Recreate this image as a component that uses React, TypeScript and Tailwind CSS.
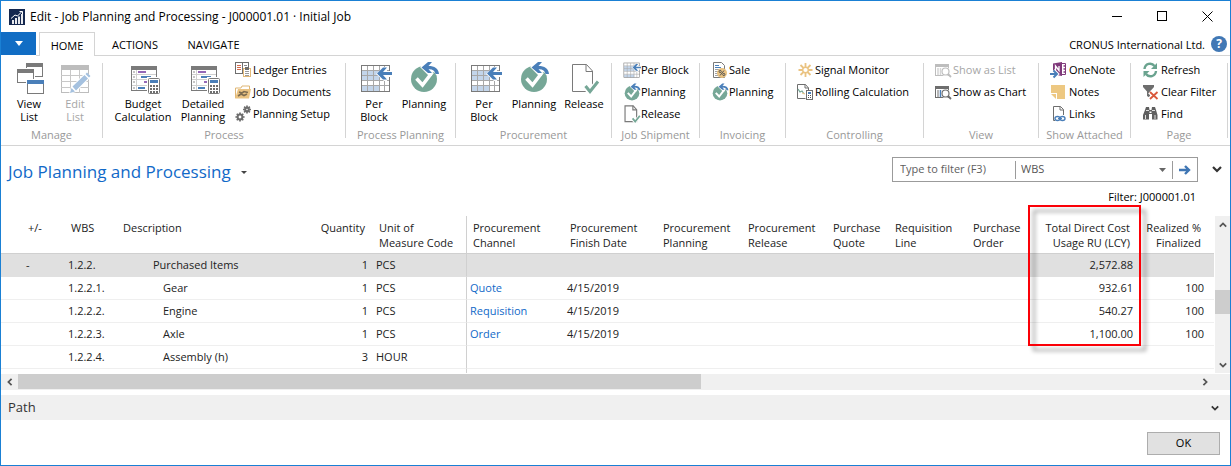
import React from "react";

type IconProps = { size?: "sm" | "lg" };
type IconType = (p: IconProps) => React.ReactElement;

const sizeClass = (size?: "sm" | "lg") =>
  size === "lg" ? "size-8 shrink-0 overflow-visible" : "size-[18px] shrink-0 overflow-visible";

const ViewListIcon: IconType = () => (
  <svg viewBox="0 0 32 32" className={sizeClass("lg")} aria-hidden="true">
    {[
      [13, 2, "#7a7a7a"],
      [4, 8, "#7a7a7a"],
      [14, 19, "#4a7fb9"],
    ].map(([x, y, c]) => (
      <g key={String(x)}>
        <rect x={Number(x) - 1} y={Number(y) - 1} width="19" height="16" fill="#fff" />
        <rect x={Number(x) + 0.5} y={Number(y) + 0.5} width="16" height="13" fill="#fff" stroke="#7a7a7a" />
        <rect x={Number(x)} y={Number(y)} width="17" height="4" fill={String(c)} />
      </g>
    ))}
  </svg>
);

const EditListIcon: IconType = () => (
  <svg viewBox="0 0 32 32" className={sizeClass("lg")} aria-hidden="true">
    <rect x="2.5" y="4.5" width="27" height="27" fill="#fff" stroke="#bdbdbd" />
    <rect x="2" y="4" width="28" height="5" fill="#bdbdbd" />
    <path d="M2 14.5h28M2 20.5h28M2 26.5h28M11.5 9v23M20.500 9v23" stroke="#c8c8c8" fill="none" />
    <path d="M10 33l2-7L27 11l5 5-15 15z" fill="#fff" />
    <path d="M11 32l1.500-5 3.500 3.500zM13.500 25.500L25.500 14l3.500 3.500L17 29.500zM26.500 13l1.500-1.500 3.500 3.500-1.500 1.500z" fill="#a5c1df" />
  </svg>
);

const CalculationIcon: IconType = () => (
  <svg viewBox="0 0 32 32" className={sizeClass("lg")} aria-hidden="true">
    <rect x="4.5" y="5.5" width="25" height="24" fill="#fff" stroke="#7a7a7a" />
    <rect x="4" y="5" width="26" height="4" fill="#7a7a7a" />
    <path d="M5 13.500h24M5 18.500h24M5 24.500h24M9.500 9v20" stroke="#d0d0d0" fill="none" />
    <path d="M6 11h2M6 16h2M6 21h2M6 27h2" stroke="#8a8a8a" />
    <path d="M11 11h8M17 21h5" stroke="#9468b8" strokeWidth="2" />
    <path d="M14 16h10M11 27h7" stroke="#4a7fb9" strokeWidth="2" />
    <rect x="20" y="16" width="14" height="18" fill="#fff" />
    <rect x="21.500" y="17.500" width="11" height="15" rx="1" fill="#fff" stroke="#7a7a7a" />
    <rect x="23" y="19" width="8" height="3" fill="#4a7fb9" />
    <path d="M23 25h2M26 25h2M29 25h2M23 28h2M26 28h2M29 28h2M23 31h2M26 31h2M29 31h2" stroke="#6e6e6e" strokeWidth="2" />
  </svg>
);

const BlockIcon: IconType = ({ size }) => (
  <svg viewBox={size === "lg" ? "0 0 32 32" : "2 1 32 32"} className={sizeClass(size)} aria-hidden="true">
    <rect x="3" y="4" width="29" height="27" fill="#fff" />
    <rect x="4" y="10" width="18" height="9" fill="#c3d5ea" />
    <rect x="4" y="25" width="18" height="5" fill="#c3d5ea" />
    <path d="M4 9.500h28M4 14.500h28M4 19.500h28M4 24.500h28M9.500 5v25M15.500 5v25M21.500 5v25M26.500 5v25" stroke="#a8a8a8" fill="none" />
    <rect x="3.500" y="4.500" width="28" height="26" fill="none" stroke="#7a7a7a" />
    <path d="M18 13l8-7h3v4h6v6h-6v4h-3z" fill="#fff" />
    <path d="M19 12.500l6-6h4l-4 4.500h9v3h-9l4 4.500h-4z" fill="#4a7fb9" />
  </svg>
);

const PlanningIcon: IconType = ({ size }) => (
  <svg viewBox="0 0 32 32" className={sizeClass(size)} aria-hidden="true">
    <circle cx="16" cy="18" r="13" fill="#76a797" />
    <path d="M8.500 17.500l6 6.500 10-13" fill="none" stroke="#fff" strokeWidth="3.500" />
    <path d="M12 6l8-6h4v3c5 1 8 4 8 11h-4c-1-3-2-3-4-3v4l-4-1z" fill="#fff" />
    <path d="M13.500 6.500L20 1h4l-3.500 4c6 0 10 2.500 10.500 8h-3.500c-.5-3.500-3-5-7-4.800L24 12h-4z" fill="#4a7fb9" />
  </svg>
);

const ReleaseIcon: IconType = ({ size }) => (
  <svg viewBox={size === "lg" ? "0 0 32 32" : "1 2 31 31"} className={sizeClass(size)} aria-hidden="true">
    <path
      d="M4.500 3.500h14l6 6.500v20.500h-20z"
      fill="#fff"
      stroke="#7a7a7a"
      strokeWidth={size === "lg" ? 1 : 2}
    />
    <path d="M18 3.500V10.500h6.500" fill="none" stroke="#7a7a7a" strokeWidth={size === "lg" ? 1 : 2} />
    <path d="M17 25l5 6 8.500-11" fill="none" stroke="#fff" strokeWidth="6" />
    <path d="M17.500 25l4.500 5.500 8-10" fill="none" stroke="#76a797" strokeWidth="3" />
  </svg>
);

const LedgerIcon: IconType = () => (
  <svg viewBox="0 0 18 18" className={sizeClass()} aria-hidden="true">
    <rect x=".5" y="1.500" width="13" height="11" fill="#fff" stroke="#6e6e6e" />
    <path d="M7.500 2v10" stroke="#6e6e6e" />
    <path d="M2 4.500h4M2 6.500h4M2 8.500h4" stroke="#d4694a" />
    <path d="M9 4.500h3" stroke="#8a8a8a" />
    <rect x="8" y="6" width="9" height="11" fill="#fff" />
    <rect x="8.500" y="7.500" width="7" height="8" fill="#fff" stroke="#e3b978" />
    <rect x="10" y="6" width="4" height="3" fill="#6e6e6e" />
    <path d="M10 10.500h4M10 12.500h4M10 14.500h4" stroke="#9a9a9a" />
  </svg>
);

const FolderIcon: IconType = () => (
  <svg viewBox="0 0 18 18" className={sizeClass()} aria-hidden="true">
    <path d="M.5 15V5h5.500l1-2h7.500v3" fill="#fff" stroke="#dfb675" />
    <path d="M0 15.500L3 6h13l-2 9.500z" fill="#eac382" />
    <path d="M4 9l3 1 2-1.500 4 1M3 13l3-2 3 1.500 3-1.500" stroke="#7d6c50" strokeWidth="1.600" fill="none" />
  </svg>
);

const gear = (cx: number, cy: number, r: number) => (
  <g transform={`translate(${cx} ${cy})`}>
    <circle r={r - 1.6} fill="none" stroke="#6e6e6e" strokeWidth="2" />
    {[0, 45, 90, 135].map((a) => (
      <g key={a} transform={`rotate(${a})`}>
        <path d={`M0 ${-r - 0.6}V${-r + 1.4}M0 ${r + 0.6}V${r - 1.4}`} stroke="#6e6e6e" strokeWidth="1.700" />
      </g>
    ))}
  </g>
);
const GearsIcon: IconType = () => (
  <svg viewBox="0 0 18 18" className={sizeClass()} aria-hidden="true">
    {gear(5, 12, 4)}
    {gear(12, 4.5, 3.4)}
  </svg>
);

const SaleIcon: IconType = () => (
  <svg viewBox="0 0 18 18" className={sizeClass()} aria-hidden="true">
    <path d="M2.500 1.500h8l3 3v12h-11z" fill="#fff" stroke="#7a7a7a" />
    <path d="M4 4.500h4M4 6.500h6" stroke="#4a7fb9" />
    <path d="M4 8.500h6M4 10.500h3M4 12.500h3M4 14.500h3" stroke="#a0a0a0" />
    <circle cx="11" cy="12" r="5" fill="#eac382" />
    <path d="M13 9.500l-4 5" stroke="#555" />
    <circle cx="9.200" cy="10.500" r="1.100" fill="none" stroke="#555" />
    <circle cx="12.800" cy="13.500" r="1.100" fill="none" stroke="#555" />
  </svg>
);

const SignalIcon: IconType = () => (
  <svg viewBox="0 0 18 18" className={sizeClass()} aria-hidden="true">
    <path
      d="M8.500 2v4.500M8.500 11.500v4.500M1.500 9h4.500M11 9h4.500M3.500 4l3.500 3.500M10 10.500l3.500 3.500M13.500 4L10 7.500M7 10.500l-3.500 3.500"
      stroke="#eac382"
      strokeWidth="1.800"
    />
    <circle cx="8.500" cy="9" r="2.800" fill="#fff" stroke="#eac382" strokeWidth="1.400" />
  </svg>
);

const RollingIcon: IconType = () => (
  <svg viewBox="0 0 18 18" className={sizeClass()} aria-hidden="true">
    <path d="M.5 1.500h8l3 3.500v10.500H.5z" fill="#fff" stroke="#6e6e6e" />
    <path d="M8 1.500V5h3.500" fill="none" stroke="#6e6e6e" />
    <path d="M1 6l2 3 2-1 2 3" fill="none" stroke="#76a797" strokeWidth="1.300" />
    <path d="M5 10l3 1" stroke="#eac382" />
    <rect x="8.500" y="7" width="9" height="11" fill="#fff" />
    <rect x="9.500" y="7.500" width="6" height="9" fill="#fff" stroke="#6e6e6e" />
    <rect x="11" y="9" width="3" height="2" fill="#4a7fb9" />
    <path d="M11 12.500h1M13 12.500h1M11 14.500h1M13 14.500h1" stroke="#555" />
  </svg>
);

const showAs = (stroke: string, bars: string): IconType => () => (
  <svg viewBox="0 0 18 18" className={sizeClass()} aria-hidden="true">
    <rect x=".5" y="3.500" width="13" height="11" fill="#fff" stroke={stroke} />
    <rect x="0" y="3" width="14" height="3" fill={stroke} />
    <path d="M3 7v7" stroke={stroke} />
    <path d="M5.500 7v7" stroke={bars} strokeWidth="1.500" />
    <circle cx="10.500" cy="10.500" r="4.500" fill="#fff" />
    <circle cx="10.500" cy="10.500" r="3.500" fill="#fff" stroke={stroke} strokeWidth="1.200" />
    <path d="M13 13l3 3" stroke={stroke} strokeWidth="1.800" />
  </svg>
);
const ShowListIcon = showAs("#bdbdbd", "#d5d5d5");
const ShowChartIcon = showAs("#6e6e6e", "#4a7fb9");

const OneNoteIcon: IconType = () => (
  <svg viewBox="0 0 18 18" className={sizeClass()} aria-hidden="true">
    <path d="M2 2.500L11 1v14l-9-1.500z" fill="#80397b" />
    <path d="M11 2.500h3.500v11H11" fill="#fff" stroke="#80397b" />
    <path d="M12.500 5h2M12.500 8h2M12.500 11h2" stroke="#80397b" strokeWidth="1.500" />
    <path d="M4.500 9V5l3.500 4.500V5" fill="none" stroke="#fff" strokeWidth="1.300" />
    <path d="M-1 13h6M2.500 9.500L6 13l-3.500 3.500" fill="none" stroke="#fff" strokeWidth="4" />
    <path d="M-1 13h6M2.500 9.500L6 13l-3.500 3.500" fill="none" stroke="#4a7fb9" strokeWidth="2" />
  </svg>
);

const NoteIcon: IconType = () => (
  <svg viewBox="0 0 18 18" className={sizeClass()} aria-hidden="true">
    <path d="M0 2h14v14H6v-6H0z" fill="#edc882" />
    <path d="M0 11h5v5z" fill="#edc882" />
  </svg>
);

const LinkIcon: IconType = () => (
  <svg viewBox="0 0 18 18" className={sizeClass()} aria-hidden="true">
    <path d="M2.500 1.500h7l3 3v11h-10z" fill="#fff" stroke="#6e6e6e" />
    <path d="M9 1.500V5h3.500" fill="none" stroke="#6e6e6e" />
    <rect x="4" y="10" width="11" height="7" fill="#fff" />
    <ellipse cx="6.500" cy="13.500" rx="2.500" ry="2" fill="none" stroke="#4a7fb9" strokeWidth="1.400" />
    <ellipse cx="11.500" cy="13.500" rx="2.500" ry="2" fill="none" stroke="#4a7fb9" strokeWidth="1.400" />
    <path d="M7 13.500h4" stroke="#4a7fb9" strokeWidth="1.200" />
  </svg>
);

const RefreshIcon: IconType = () => (
  <svg viewBox="0 0 18 18" className={sizeClass()} aria-hidden="true">
    <path d="M1.500 8C2 2.500 8.500 1 11.500 5" fill="none" stroke="#6aa38f" strokeWidth="2.400" />
    <path d="M14 2V8H8z" fill="#6aa38f" />
    <path d="M13 10c-.5 5.500-7 7-10 3" fill="none" stroke="#6aa38f" strokeWidth="2.400" />
    <path d="M.5 16V10h6z" fill="#6aa38f" />
  </svg>
);

const ClearFilterIcon: IconType = () => (
  <svg viewBox="0 0 18 18" className={sizeClass()} aria-hidden="true">
    <path d="M0 2h11v2L7 8.500V15l-3-2V8.500L0 4z" fill="#6e6e6e" />
    <path d="M6.500 9l8 7M14.500 9l-8 7" stroke="#fff" strokeWidth="4" />
    <path d="M7 9l7.500 7M14.500 9L7 16" stroke="#d9583b" strokeWidth="1.800" />
  </svg>
);

const FindIcon: IconType = () => (
  <svg viewBox="0 0 18 18" className={sizeClass()} aria-hidden="true">
    <path
      d="M2 5l1-3h3l.5 3h2L9 2h3l1 3 1.500 5v4.500H9V9H6v5.500H0V10zM6.500 6.500v1.500h2V6.500z"
      fill="#5f5f5f"
      fillRule="evenodd"
    />
    <path d="M2.500 10v4M12 10v4M3 5.500h3M9 5.500h3" stroke="#fff" strokeWidth=".8" />
  </svg>
);

const AppLogo = () => (
  <svg viewBox="0 0 16 16" className="size-4 shrink-0" aria-hidden="true">
    <rect width="16" height="16" fill="#15284f" />
    <path d="M4 15v-4M7 15V9M10 15V7.500M13 15V5" stroke="#fff" strokeWidth="1.800" />
    <path d="M2 9.500L6 6l2.500 1L13 2.500M10.500 2.500h3V5" fill="none" stroke="#fff" strokeWidth="1" />
  </svg>
);

const Chevron = ({ d, className }: { d: string; className: string }) => (
  <svg viewBox="0 0 10 10" className={className} aria-hidden="true">
    <path d={d} fill="none" stroke="currentColor" strokeWidth="2.200" />
  </svg>
);
const DOWN = "M1 3l4 4 4-4";
const UP = "M1 7l4-4 4 4";
const LEFT = "M7 1L3 5l4 4";
const RIGHT = "M3 1l4 4-4 4";

const BigButton = ({
  icon: Icon,
  lines,
  className,
  disabled,
}: {
  icon: IconType;
  lines: string[];
  className: string;
  disabled?: boolean;
}) => (
  <button
    type="button"
    disabled={disabled}
    className={`flex shrink-0 flex-col items-center gap-1 pt-[2px] leading-[13px] whitespace-nowrap disabled:text-[#a6a6a6] ${className}`}
  >
    <Icon size="lg" />
    <span className="flex flex-col items-center">
      {lines.map((l) => (
        <span key={l}>{l}</span>
      ))}
    </span>
  </button>
);

const SmallButton = ({ icon: Icon, label, disabled }: { icon: IconType; label: string; disabled?: boolean }) => (
  <button
    type="button"
    disabled={disabled}
    className="flex h-[22px] items-center whitespace-nowrap disabled:text-[#a6a6a6]"
  >
    <Icon size="sm" />
    <span>{label}</span>
  </button>
);

const Group = ({
  label,
  width,
  inset,
  children,
}: {
  label: string;
  width: string;
  inset: string;
  children: React.ReactNode;
}) => (
  <>
    <section aria-label={label} className={`flex shrink-0 flex-col pt-[3px] ${width}`}>
      <div className={`flex h-[66px] ${inset}`}>{children}</div>
      <div className="h-5 text-center leading-5 whitespace-nowrap text-[#999]">{label}</div>
    </section>
    <div className="my-[7px] w-px shrink-0 bg-[#d4d4d4]" />
  </>
);

const Ribbon = () => (
  <div className="flex h-[90px] overflow-hidden border-b border-[#d4d4d4]">
    <Group label="Manage" width="w-[101px]" inset="pl-[5px]">
      <BigButton icon={ViewListIcon} lines={["View", "List"]} className="w-[46px]" />
      <BigButton icon={EditListIcon} lines={["Edit", "List"]} className="w-[46px]" disabled />
    </Group>
    <Group label="Process" width="w-[242px]" inset="pl-[10px]">
      <BigButton icon={CalculationIcon} lines={["Budget", "Calculation"]} className="w-[60px]" />
      <BigButton icon={CalculationIcon} lines={["Detailed", "Planning"]} className="w-[60px]" />
      <div className="pl-[2px]">
        <SmallButton icon={LedgerIcon} label="Ledger Entries" />
        <SmallButton icon={FolderIcon} label="Job Documents" />
        <SmallButton icon={GearsIcon} label="Planning Setup" />
      </div>
    </Group>
    <Group label="Process Planning" width="w-[109px]" inset="pl-[3px]">
      <BigButton icon={BlockIcon} lines={["Per", "Block"]} className="w-[50px]" />
      <BigButton icon={PlanningIcon} lines={["Planning"]} className="w-[50px]" />
    </Group>
    <Group label="Procurement" width="w-[155px]" inset="pl-[3px]">
      <BigButton icon={BlockIcon} lines={["Per", "Block"]} className="w-[50px]" />
      <BigButton icon={PlanningIcon} lines={["Planning"]} className="w-[50px]" />
      <BigButton icon={ReleaseIcon} lines={["Release"]} className="w-[50px]" />
    </Group>
    <Group label="Job Shipment" width="w-[87px]" inset="flex-col pl-[11px]">
      <SmallButton icon={BlockIcon} label="Per Block" />
      <SmallButton icon={PlanningIcon} label="Planning" />
      <SmallButton icon={ReleaseIcon} label="Release" />
    </Group>
    <Group label="Invoicing" width="w-[85px]" inset="flex-col pl-[11px]">
      <SmallButton icon={SaleIcon} label="Sale" />
      <SmallButton icon={PlanningIcon} label="Planning" />
    </Group>
    <Group label="Controlling" width="w-[137px]" inset="flex-col pl-[11px]">
      <SmallButton icon={SignalIcon} label="Signal Monitor" />
      <SmallButton icon={RollingIcon} label="Rolling Calculation" />
    </Group>
    <Group label="View" width="w-[114px]" inset="flex-col pl-[11px]">
      <SmallButton icon={ShowListIcon} label="Show as List" disabled />
      <SmallButton icon={ShowChartIcon} label="Show as Chart" />
    </Group>
    <Group label="Show Attached" width="w-[91px]" inset="flex-col pl-3">
      <SmallButton icon={OneNoteIcon} label="OneNote" />
      <SmallButton icon={NoteIcon} label="Notes" />
      <SmallButton icon={LinkIcon} label="Links" />
    </Group>
    <Group label="Page" width="w-[96px]" inset="flex-col pl-3">
      <SmallButton icon={RefreshIcon} label="Refresh" />
      <SmallButton icon={ClearFilterIcon} label="Clear Filter" />
      <SmallButton icon={FindIcon} label="Find" />
    </Group>
  </div>
);

type Column = { head: string[]; width: string; align?: string; pad?: string };

const columns: Column[] = [
  { head: ["+/-"], width: "w-[63px]", pad: "pl-[27px]" },
  { head: ["WBS"], width: "w-[52px]" },
  { head: ["Description"], width: "w-[183px]" },
  { head: ["Quantity"], width: "w-[73px]", align: "text-right" },
  { head: ["Unit of", "Measure Code"], width: "w-[94px]" },
  { head: ["Procurement", "Channel"], width: "w-[97px]" },
  { head: ["Procurement", "Finish Date"], width: "w-[93px]" },
  { head: ["Procurement", "Planning"], width: "w-[85px]" },
  { head: ["Procurement", "Release"], width: "w-[85px]" },
  { head: ["Purchase", "Quote"], width: "w-[62px]" },
  { head: ["Requisition", "Line"], width: "w-[78px]" },
  { head: ["Purchase", "Order"], width: "w-[64px]" },
  { head: ["Total Direct Cost", "Usage RU (LCY)"], width: "w-[107px]", align: "text-right" },
  { head: ["Realized %", "Finalized"], width: "w-[71px]", align: "text-right" },
];

type Row = {
  sign?: string;
  wbs: string;
  text: string;
  qty: number;
  unit: string;
  channel?: string;
  date?: string;
  cost?: string;
  done?: string;
};

const rows: Row[] = [
  { sign: "-", wbs: "1.2.2.", text: "Purchased Items", qty: 1, unit: "PCS", cost: "2,572.88" },
  { wbs: "1.2.2.1.", text: "Gear", qty: 1, unit: "PCS", channel: "Quote", date: "4/15/2019", cost: "932.61", done: "100" },
  { wbs: "1.2.2.2.", text: "Engine", qty: 1, unit: "PCS", channel: "Requisition", date: "4/15/2019", cost: "540.27", done: "100" },
  { wbs: "1.2.2.3.", text: "Axle", qty: 1, unit: "PCS", channel: "Order", date: "4/15/2019", cost: "1,100.00", done: "100" },
  { wbs: "1.2.2.4.", text: "Assembly (h)", qty: 3, unit: "HOUR" },
];

const Grid = () => (
  <table className="w-full table-fixed border-separate border-spacing-0 text-[#222]">
    <thead>
      <tr className="h-[38px]">
        {columns.map((c, i) => (
          <th
            key={i}
            scope="col"
            className={`border-b border-[#d0d0d0] pt-1 align-top leading-[15px] font-normal whitespace-nowrap ${c.width} ${c.align ?? "text-left"} ${c.pad ?? "px-[7px]"} ${i === 5 ? "border-l pl-[6px]" : ""}`}
          >
            {c.head.map((h) => (
              <span key={h} className="block">
                {h}
              </span>
            ))}
          </th>
        ))}
        <td className="border-b border-[#d0d0d0]" />
      </tr>
    </thead>
    <tbody>
      {rows.map((r) => {
        const selected = r.sign === "-";
        const cells = [
          r.sign,
          r.wbs,
          r.text,
          r.qty,
          r.unit,
          r.channel && (
            <a href="#" className="text-[#1169c8]">
              {r.channel}
            </a>
          ),
          r.date,
          "",
          "",
          "",
          "",
          "",
          r.cost,
          r.done,
          "",
        ];
        return (
          <tr key={r.wbs} className={selected ? "bg-[#e0e0e0]" : ""}>
            {cells.map((c, i) => {
              const pad = i === 0 ? "pl-[25px]" : i === 2 ? (selected ? "pl-[37px]" : "pl-[47px]") : i === 5 ? "pl-[3px]" : "px-1";
              return (
                <td
                  key={i}
                  className={`h-[23px] border-b leading-[22px] whitespace-nowrap ${selected ? "border-b-[#e0e0e0]" : "border-b-[#efefef]"} ${pad} ${columns[i]?.align ?? ""} ${i === 5 ? "border-l border-l-[#d0d0d0]" : ""}`}
                >
                  {c}
                </td>
              );
            })}
          </tr>
        );
      })}
      <tr className="h-1">
        <td colSpan={5} />
        <td colSpan={10} className="border-l border-[#d0d0d0]" />
      </tr>
    </tbody>
  </table>
);

export default function App() {
  return (
    <main className="flex min-h-screen flex-col border border-[#1a80d4] bg-white font-['Open_Sans','Noto_Sans',sans-serif] text-[11px] text-black">
      <header className="flex h-[31px] items-center pl-2">
        <AppLogo />
        <h1 className="pl-[5px] text-xs">Edit - Job Planning and Processing - J000001.01 · Initial Job</h1>
        <div className="ml-auto flex">
          <button type="button" aria-label="Minimize" className="flex h-[30px] w-[45px] items-center justify-center">
            <svg viewBox="0 0 11 11" className="size-[11px]"><path d="M0 5.500h10" stroke="#000" /></svg>
          </button>
          <button type="button" aria-label="Maximize" className="flex h-[30px] w-[45px] items-center justify-center">
            <svg viewBox="0 0 11 11" className="size-[11px]"><rect x=".5" y=".5" width="9" height="9" fill="none" stroke="#000" /></svg>
          </button>
          <button type="button" aria-label="Close" className="flex h-[30px] w-[45px] items-center justify-center">
            <svg viewBox="0 0 11 11" className="size-[11px]"><path d="M.5.5l10 10M10.500.5l-10 10" stroke="#000" /></svg>
          </button>
        </div>
      </header>

      <nav className="flex h-6 items-stretch">
        <button type="button" aria-label="Application menu" className="mb-px flex w-[35px] items-center justify-center bg-[#116dc4]">
          <svg viewBox="0 0 8 5" className="h-[5px] w-2"><path d="M0 0h8L4 5z" fill="#fff" /></svg>
        </button>
        <div className="w-[3px] border-b border-[#d4d4d4]" />
        <button type="button" className="w-[56px] border border-b-0 border-[#d4d4d4] pt-1">HOME</button>
        <button type="button" className="w-20 border-b border-[#d4d4d4] pt-1">ACTIONS</button>
        <button type="button" className="w-[77px] border-b border-[#d4d4d4] pt-1">NAVIGATE</button>
        <div className="flex flex-1 items-center justify-end gap-[6px] border-b border-[#d4d4d4] pr-[3px]">
          <span className="pt-1">CRONUS International Ltd.</span>
          <button type="button" aria-label="Help" className="flex size-4 items-center justify-center rounded-full bg-[#4178b5] text-xs leading-4 font-bold text-white">
            ?
          </button>
        </div>
      </nav>

      <Ribbon />

      <div className="flex h-[41px] items-end pr-2 pl-[7px]">
        <button type="button" className="flex items-center gap-[10px] pb-[3px] text-[17px] leading-6 text-[#1169c8]">
          <span>Job Planning and Processing</span>
          <svg viewBox="0 0 6 3" className="h-[3px] w-[6px]"><path d="M0 0h6L3 3z" fill="#444" /></svg>
        </button>
        <div className="mb-[5px] ml-auto flex h-[25px] w-[306px] items-center border border-[#9b9b9b] text-[#555]">
          <input aria-label="Type to filter" placeholder="Type to filter (F3)" className="h-full w-[122px] px-[7px] pb-[2px] outline-none placeholder:text-[#5e5e5e]" />
          <div className="h-[18px] w-px bg-[#9b9b9b]" />
          <select aria-label="Filter column" className="h-full flex-1 appearance-none px-[5px] outline-none" defaultValue="WBS">
            <option>WBS</option>
          </select>
          <svg viewBox="0 0 7 4" className="mr-[6px] h-1 w-[7px]"><path d="M0 0h7L3.500 4z" fill="#666" /></svg>
          <div className="h-[18px] w-px bg-[#9b9b9b]" />
          <button type="button" aria-label="Apply filter" className="flex h-full w-6 items-center justify-center">
            <svg viewBox="0 0 12 10" className="h-[10px] w-3"><path d="M0 5h10M6 1l4 4-4 4" fill="none" stroke="#3f76b4" strokeWidth="2.400" /></svg>
          </button>
        </div>
        <button type="button" aria-label="Expand filter" className="mb-[13px] ml-[14px] text-[#333]">
          <Chevron d={DOWN} className="size-[10px]" />
        </button>
      </div>
      <p className="h-[29px] pt-[2px] pr-[34px] text-right leading-[15px]">Filter: J000001.01</p>

      <div className="relative flex h-[157px]">
        <div className="min-w-0 flex-1 overflow-hidden">
          <Grid />
        </div>
        <div className="ml-px flex w-[15px] flex-col items-center bg-[#f0f0f0] text-[#555]">
          <div className="flex h-[17px] items-center"><Chevron d={UP} className="size-2" /></div>
          <div className="mt-[57px] h-6 w-full bg-[#cdcdcd]" />
          <div className="mt-auto flex h-[17px] items-center"><Chevron d={DOWN} className="size-2" /></div>
        </div>
        <div className="pointer-events-none absolute -top-[11px] right-[89px] h-[141px] w-[113px] border-2 border-[#fb0007] drop-shadow-[5px_5px_2px_rgba(0,0,0,0.4)]" />
      </div>

      <div className="mt-px flex h-4 items-center bg-[#f0f0f0] text-[#555]">
        <div className="flex w-[17px] justify-center"><Chevron d={LEFT} className="size-2" /></div>
        <div className="flex h-full flex-1"><div className="h-[15px] w-[58%] bg-[#cdcdcd]" /></div>
        <div className="mr-[17px] flex w-[17px] justify-center"><Chevron d={RIGHT} className="size-2" /></div>
      </div>

      <button type="button" className="mt-[5px] flex h-[25px] items-center justify-between bg-[#f0f0f0] pr-[11px] pl-[7px] text-[13px] text-[#333]">
        <span>Path</span>
        <Chevron d={DOWN} className="size-2" />
      </button>

      <footer className="flex justify-end pt-3 pr-[10px] pb-[10px]">
        <button type="button" className="h-[23px] w-[73px] border border-[#adadad] bg-[#e1e1e1]">OK</button>
      </footer>
    </main>
  );
}
